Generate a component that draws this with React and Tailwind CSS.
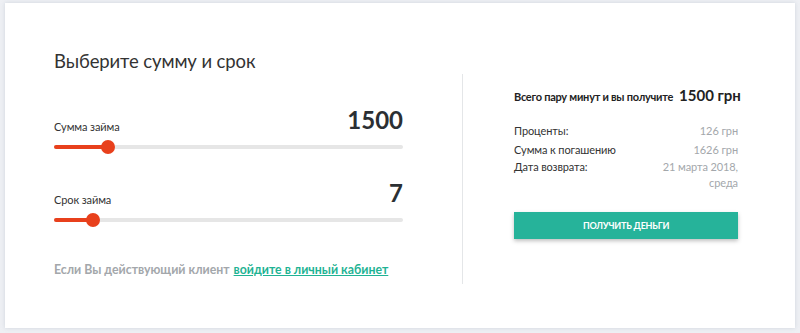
export default function App() {
  const font = { fontFamily: 'Lato, "Noto Sans", sans-serif' };
  return (
    <div className="w-[800px] h-[333px] bg-[#eef0f4] pt-[3px] px-[5px] overflow-hidden" style={font}>
      <div className="bg-white h-[325px] shadow-[0_0_4px_rgba(150,160,180,0.35)] flex">
        <div className="w-[398px] pl-[49px] pt-[44px]">
          <h1 className="text-[18.5px] leading-[28px] text-[#333] font-normal tracking-[-0.1px]">Выберите сумму и срок</h1>
          <div className="mt-[31px]">
            <div className="flex items-end justify-between">
              <span className="text-[11px] leading-[16px] text-[#333] mb-[-1px] tracking-[-0.1px]">Сумма займа</span>
              <span className="text-[24px] leading-[28px] font-bold text-[#2b2f33]">1500</span>
            </div>
            <div className="relative h-[14px] mt-[6px]">
              <div className="absolute left-0 right-0 top-[5px] h-[4px] rounded-full bg-[#e6e6e6]" />
              <div className="absolute left-0 w-[54px] top-[5px] h-[4px] rounded-full bg-[#e8401c]" />
              <div className="absolute left-[47px] top-0 w-[14px] h-[14px] rounded-full bg-[#e8401c]" />
            </div>
          </div>
          <div className="mt-[25px]">
            <div className="flex items-end justify-between">
              <span className="text-[11px] leading-[16px] text-[#333] mb-[-1px] tracking-[-0.1px]">Срок займа</span>
              <span className="text-[24px] leading-[28px] font-bold text-[#2b2f33]">7</span>
            </div>
            <div className="relative h-[14px] mt-[6px]">
              <div className="absolute left-0 right-0 top-[5px] h-[4px] rounded-full bg-[#e6e6e6]" />
              <div className="absolute left-0 w-[39px] top-[5px] h-[4px] rounded-full bg-[#e8401c]" />
              <div className="absolute left-[32px] top-0 w-[14px] h-[14px] rounded-full bg-[#e8401c]" />
            </div>
          </div>
          <p className="mt-[34px] text-[12.3px] leading-[18px] font-bold text-[#a3a7ab] whitespace-nowrap">
            Если Вы действующий клиент{" "}
            <a href="#" className="text-[#1fb394] underline ml-[1px]">войдите в личный кабинет</a>
          </p>
        </div>
        <div className="ml-[59px] mt-[71px] h-[210px] border-l border-[#e4e6e8] pl-[51px] w-[331px]">
          <div className="pr-[55px] pt-[12px]">
            <div className="flex items-baseline text-[#222] font-bold whitespace-nowrap">
              <span className="text-[11px] leading-[18px] tracking-[-0.25px]">Всего пару минут и вы получите</span>
              <span className="text-[15px] leading-[18px] ml-[6px]">1500 грн</span>
            </div>
            <div className="mt-[17px] text-[11px] leading-[16px] tracking-[-0.1px]">
              <div className="flex justify-between mb-[3px]">
                <span className="text-[#333]">Проценты:</span>
                <span className="text-[#a3a7ab]">126 грн</span>
              </div>
              <div className="flex justify-between mb-[1px]">
                <span className="text-[#333]">Сумма к погашению</span>
                <span className="text-[#a3a7ab]">1626 грн</span>
              </div>
              <div className="flex justify-between">
                <span className="text-[#333]">Дата возврата:</span>
                <span className="text-[#a3a7ab] text-right">21 марта 2018,<br />среда</span>
              </div>
            </div>
            <button className="mt-[21px] w-full h-[27px] bg-[#26b39a] text-white text-[9px] font-bold uppercase tracking-[-0.2px] shadow-[0_2px_4px_rgba(0,0,0,0.25)]">
              Получить деньги
            </button>
          </div>
        </div>
      </div>
    </div>
  );
}
